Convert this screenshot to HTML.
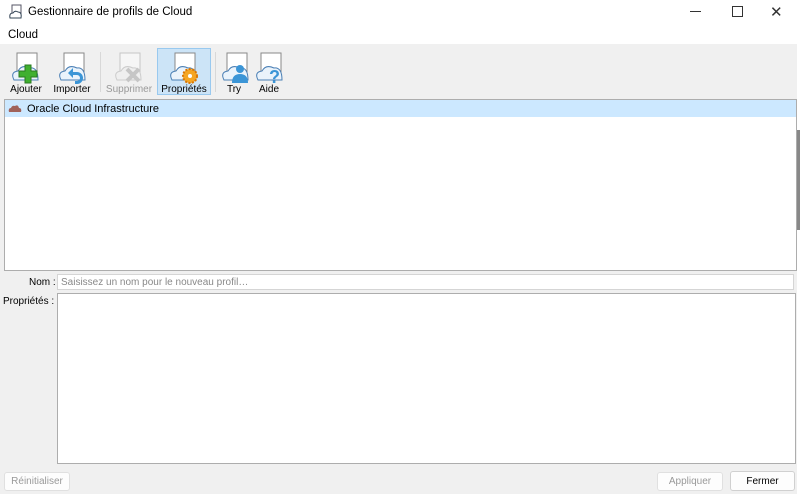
<!DOCTYPE html><html><head><style>
body{margin:0;width:800px;height:494px;overflow:hidden;background:#f0f0f0;font-family:"Liberation Sans",sans-serif;font-size:11px;color:#000;position:relative}
.a{position:absolute}
.tb{left:0;top:0;width:797px;height:44px;background:#fff}
.lbl{font-size:10px;text-align:center;top:84px}
.ic{top:52px;width:32px;height:32px}
.btn{border:1px solid #d0d0d0;border-radius:3px;background:#fdfdfd;text-align:center;line-height:17px;font-size:10px}
</style></head><body>
<div class="a tb"></div>
<div class="a" style="left:797px;top:0;width:3px;height:494px;background:#fff"></div>
<div class="a" style="left:797px;top:130px;width:3px;height:100px;background:#888"></div>
<svg class="a" style="left:8px;top:4px" width="16" height="16"><rect x="4" y="1" width="9" height="11" fill="#fff" stroke="#556"/><path d="M2 14 Q1 9 5 9 Q7 6 10 8 Q14 8 13 14Z" fill="#fff" stroke="#345"/></svg>
<div class="a" style="left:28px;top:6px;font-size:11.5px">Gestionnaire de profils de Cloud</div>
<div class="a" style="left:690px;top:11px;width:11px;height:1px;background:#333"></div>
<div class="a" style="left:732px;top:6px;width:9px;height:9px;border:1px solid #333"></div>
<div class="a" style="left:770px;top:3px;font-size:15px;color:#333">✕</div>
<div class="a" style="left:8px;top:29px;font-size:11.5px">Cloud</div>
<div class="a" style="left:157px;top:48px;width:54px;height:47px;background:#cce4f7;border:1px solid #99c9ef;box-sizing:border-box"></div>
<div class="a" style="left:100px;top:52px;width:1px;height:40px;background:#d8d8d8"></div>
<div class="a" style="left:215px;top:52px;width:1px;height:40px;background:#d8d8d8"></div>
<svg class="a ic" style="left:10px"><rect x="7" y="1" width="20" height="22" fill="#fff" stroke="#888"/><path d="M4 28 Q0 20 8 19 Q12 12 20 16 Q28 15 28 28Z" fill="#eaf3fb" stroke="#4a7fb5"/><path d="M15 13h6v6h6v6h-6v6h-6v-6h-6v-6h6z" fill="#40b030" stroke="#2a7a20"/></svg>
<svg class="a ic" style="left:57px"><rect x="7" y="1" width="20" height="22" fill="#fff" stroke="#888"/><path d="M4 28 Q0 20 8 19 Q12 12 20 16 Q28 15 28 28Z" fill="#eaf3fb" stroke="#4a7fb5"/><path d="M16 16 l-5 5 5 5v-3h4a3 3 0 010 6h-2v3h2a6 6 0 000-12h-4z" fill="#3b95d6"/></svg>
<svg class="a ic" style="left:113px;opacity:.4"><rect x="7" y="1" width="20" height="22" fill="#fff" stroke="#888"/><path d="M4 28 Q0 20 8 19 Q12 12 20 16 Q28 15 28 28Z" fill="#eee" stroke="#999"/><path d="M14 17l12 12M26 17l-12 12" stroke="#888" stroke-width="4"/></svg>
<svg class="a ic" style="left:168px"><rect x="7" y="1" width="20" height="22" fill="#fff" stroke="#888"/><path d="M4 28 Q0 20 8 19 Q12 12 20 16 Q28 15 28 28Z" fill="#eaf3fb" stroke="#4a7fb5"/><circle cx="22" cy="24" r="7" fill="#f5a623" stroke="#d97706" stroke-width="2" stroke-dasharray="2 1.5"/><circle cx="22" cy="24" r="2" fill="#fff"/></svg>
<svg class="a ic" style="left:220px"><rect x="7" y="1" width="20" height="22" fill="#fff" stroke="#888"/><path d="M4 28 Q0 20 8 19 Q12 12 20 16 Q28 15 28 28Z" fill="#eaf3fb" stroke="#4a7fb5"/><circle cx="20" cy="17" r="4" fill="#3b95d6"/><path d="M12 31q0-9 8-9t8 9z" fill="#3b95d6"/></svg>
<svg class="a ic" style="left:254px"><rect x="7" y="1" width="20" height="22" fill="#fff" stroke="#888"/><path d="M4 28 Q0 20 8 19 Q12 12 20 16 Q28 15 28 28Z" fill="#eaf3fb" stroke="#4a7fb5"/><text x="15" y="31" font-size="18" font-weight="bold" fill="#3b95d6" font-family="Liberation Sans">?</text></svg>
<div class="a lbl" style="left:5px;width:42px">Ajouter</div>
<div class="a lbl" style="left:50px;width:44px">Importer</div>
<div class="a lbl" style="left:104px;width:50px;color:#999">Supprimer</div>
<div class="a lbl" style="left:157px;width:54px">Propriétés</div>
<div class="a lbl" style="left:220px;width:28px">Try</div>
<div class="a lbl" style="left:254px;width:30px">Aide</div>
<div class="a" style="left:4px;top:99px;width:791px;height:170px;background:#fff;border:1px solid #adadad"></div>
<div class="a" style="left:5px;top:100px;width:791px;height:17px;background:#cce8ff"></div>
<svg class="a" style="left:8px;top:103px" width="14" height="10"><path d="M1 9Q0 5 3 5Q4 2 7 3Q10 1 11 5Q14 5 13 9Z" fill="#a0625a"/></svg>
<div class="a" style="left:27px;top:103px;font-size:11px">Oracle Cloud Infrastructure</div>
<div class="a" style="left:29px;top:277px;font-size:10px">Nom :</div>
<div class="a" style="left:57px;top:274px;width:737px;height:16px;background:#fff;border:1px solid #d5d5d5;box-sizing:border-box;font-size:10px;color:#888;padding:2px 3px">Saisissez un nom pour le nouveau profil…</div>
<div class="a" style="left:3px;top:296px;font-size:10px">Propriétés :</div>
<div class="a" style="left:57px;top:293px;width:739px;height:171px;background:#fff;border:1px solid #adadad;box-sizing:border-box"></div>
<div class="a btn" style="left:4px;top:472px;width:64px;height:17px;color:#999;border-color:#e0e0e0">Réinitialiser</div>
<div class="a btn" style="left:657px;top:472px;width:64px;height:17px;color:#999;border-color:#e0e0e0">Appliquer</div>
<div class="a btn" style="left:730px;top:471px;width:63px;height:18px;line-height:19px">Fermer</div>
</body></html>
